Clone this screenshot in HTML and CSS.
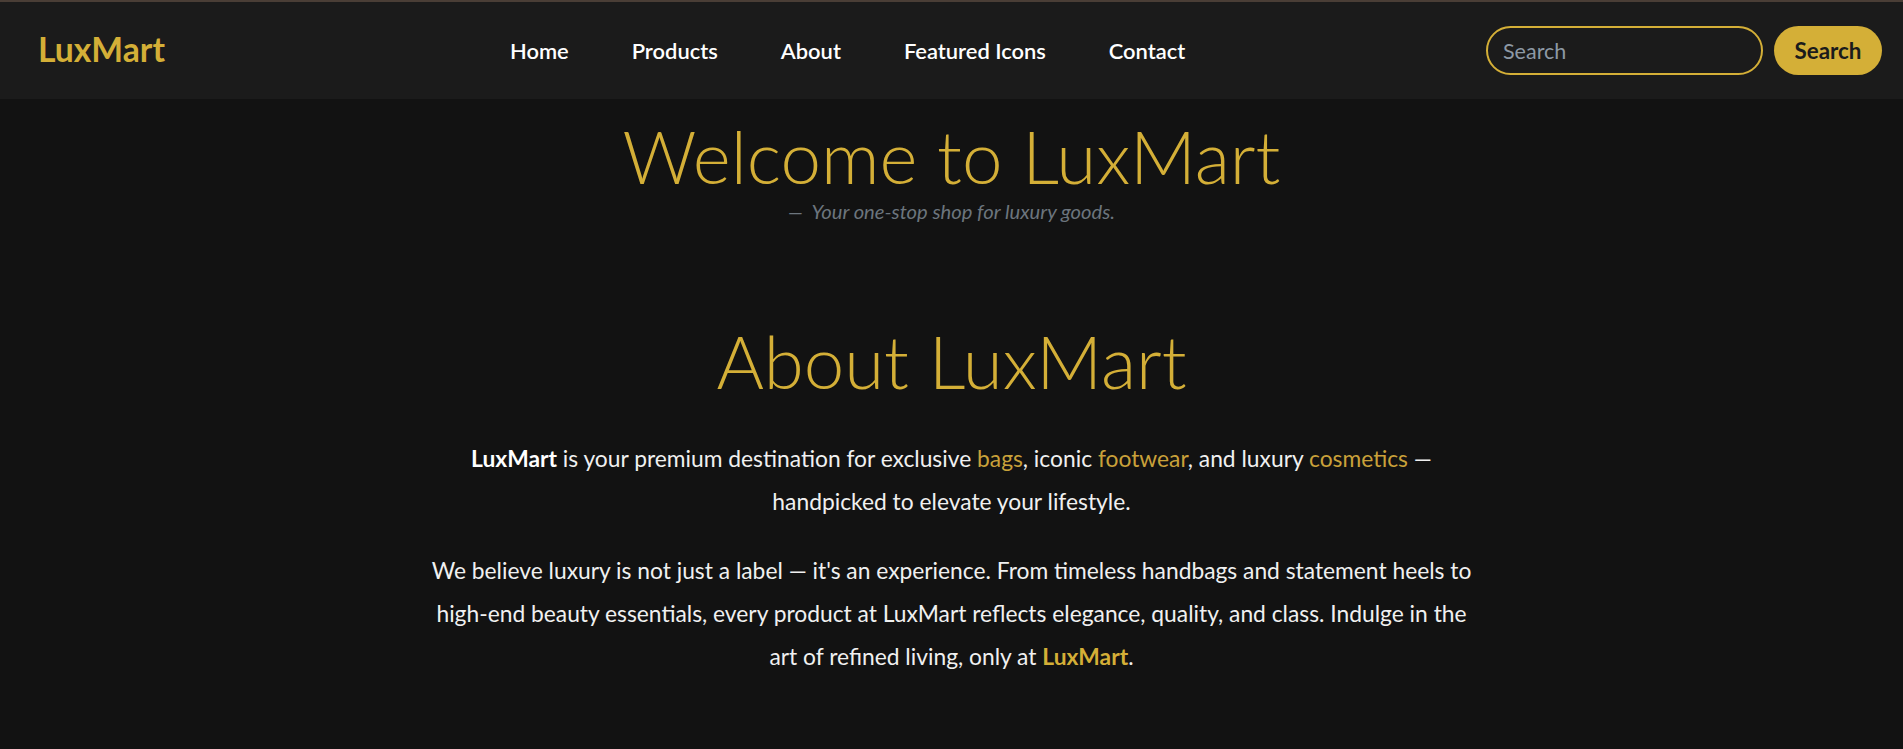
FILE: index.html
```html
<!DOCTYPE html>
<html lang="en">
<head>
<meta charset="utf-8">
<title>LuxMart</title>
<link rel="stylesheet" href="styles.css">
</head>
<body>
<header class="navbar">
  <a class="brand" href="#">LuxMart</a>
  <nav class="nav">
    <a href="#">Home</a>
    <a href="#">Products</a>
    <a href="#">About</a>
    <a href="#">Featured Icons</a>
    <a href="#">Contact</a>
  </nav>
  <form class="search">
    <input class="search-input" type="text" placeholder="Search">
    <button class="search-btn" type="button">Search</button>
  </form>
</header>
<main>
  <section class="hero">
    <h1 class="hero-title">Welcome to LuxMart</h1>
    <p class="hero-sub">Your one-stop shop for luxury goods.</p>
  </section>
  <section class="about">
    <h2 class="about-title">About LuxMart</h2>
    <p class="about-text"><strong class="strong-white">LuxMart</strong> is your premium destination for exclusive <span class="gold">bags</span>, iconic <span class="gold">footwear</span>, and luxury <span class="gold">cosmetics</span> — handpicked to elevate your lifestyle.</p>
    <p class="about-text">We believe luxury is not just a label — it's an experience. From timeless handbags and statement heels to high-end beauty essentials, every product at LuxMart reflects elegance, quality, and class. Indulge in the art of refined living, only at <strong class="strong-gold">LuxMart</strong>.</p>
  </section>
</main>
</body>
</html>
```
FILE: styles.css
```css
html {
  overflow-y: scroll;
  background: #121212;
}
html::-webkit-scrollbar {
  width: 6px;
}
html::-webkit-scrollbar-track {
  background: #2b2b2b;
}
html::-webkit-scrollbar-thumb {
  background: #2b2b2b;
}
body {
  margin: 0;
  background: #121212;
  color: #f0f0f0;
  font-family: "Lato", "Open Sans", sans-serif;
}
a { text-decoration: none; }

.navbar {
  display: flex;
  align-items: center;
  height: 97px;
  border-top: 2px solid #4a3e36;
  background: #1b1b1b;
  padding: 0 21px 0 38px;
}
.brand {
  color: #d4af37;
  font-weight: 700;
  font-size: 33.7px;
  line-height: 1;
  padding-bottom: 2px;
}
.nav {
  display: flex;
  gap: 63px;
  margin-left: 345px;
}
.nav a {
  color: #ffffff;
  font-weight: 600;
  font-size: 21.9px;
}
.search {
  display: flex;
  align-items: center;
  gap: 11px;
  margin: 0 0 0 auto;
}
.search-input {
  box-sizing: border-box;
  width: 277px;
  height: 49px;
  border: 2px solid #d4af37;
  border-radius: 25px;
  background: transparent;
  padding: 0 15px;
  font-family: "Lato", sans-serif;
  font-size: 21.5px;
  color: #fff;
  outline: none;
}
.search-input::placeholder {
  color: #8d99a5;
}
.search-btn {
  width: 108px;
  height: 49px;
  border: 0;
  border-radius: 25px;
  background: #d4af37;
  color: #1b1b1b;
  font-family: "Lato", sans-serif;
  font-weight: 700;
  font-size: 22.4px;
  padding: 0;
}

.hero {
  text-align: center;
  padding-top: 13px;
}
.hero-title {
  margin: 0;
  font-weight: 300;
  font-size: 72.7px;
  line-height: 1.2;
  color: #d4af37;
}
.hero-sub {
  margin: 0;
  font-style: italic;
  font-size: 20.2px;
  line-height: 1.2;
  color: #6c757d;
}
.hero-sub::before {
  content: "\2014\00A0\00A0";
}

.about {
  max-width: 1060px;
  margin: 94px auto 0;
  text-align: center;
}
.about-title {
  margin: 0 0 32px;
  font-weight: 300;
  font-size: 72.6px;
  line-height: 1.2;
  color: #d4af37;
}
.about-text {
  margin: 0 0 25.6px;
  font-size: 22.8px;
  line-height: 43.2px;
  color: #f0f0f0;
}
.strong-white {
  color: #ffffff;
  font-weight: 700;
}
.strong-gold {
  color: #d4af37;
  font-weight: 700;
}
.gold {
  color: #c9a13a;
}
```
